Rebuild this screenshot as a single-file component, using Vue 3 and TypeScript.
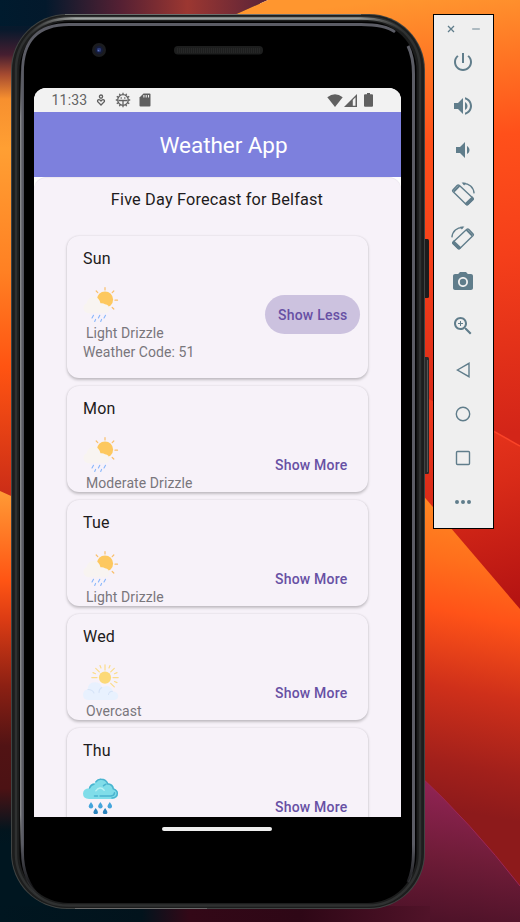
<script setup lang="ts">
import { ref } from 'vue'

type Weather = 'drizzle' | 'overcast' | 'rain'

interface Day {
  name: string
  weather: Weather
  label?: string
  code: number
  open: boolean
}

interface Tool {
  name: string
  solid?: string
  line?: string
  mirrored?: boolean
}

const days = ref<Day[]>([
  { name: 'Sun', weather: 'drizzle', label: 'Light Drizzle', code: 51, open: true },
  { name: 'Mon', weather: 'drizzle', label: 'Moderate Drizzle', code: 53, open: false },
  { name: 'Tue', weather: 'drizzle', label: 'Light Drizzle', code: 51, open: false },
  { name: 'Wed', weather: 'overcast', label: 'Overcast', code: 3, open: false },
  { name: 'Thu', weather: 'rain', code: 61, open: false },
])

const rotateSolid =
  'M2 8.800 7.600 3.200 9.200 4.600 3.600 10.300zM13.600 21.600 21.200 14.200 22.900 16.200Q23.300 17.200 22.600 17.900L17.200 23.200Q16.200 23.900 15.200 23.200zM10.600.6 15 .7 13.200 3.600z'
const rotateLine = 'M6.1 3.5 1.9 7.900Q1.200 8.700 1.900 9.500L15.200 22.400Q16 23 16.700 22.400L21.800 17.400Q22.500 16.600 21.800 15.900L8.200 3.300Q7.100 2.500 6.100 3.500ZM12 1.500C18 1.200 22.600 5.200 23.100 11.400'

const tools: Tool[] = [
  { name: 'power', solid: 'M13 3h-2v10h2V3zm4.830 2.170l-1.420 1.420C17.990 7.860 19 9.810 19 12c0 3.870-3.130 7-7 7s-7-3.130-7-7c0-2.190 1.010-4.140 2.580-5.420L6.170 5.170C4.230 6.820 3 9.260 3 12c0 4.970 4.030 9 9 9s9-4.030 9-9c0-2.740-1.230-5.180-3.170-6.830z' },
  { name: 'volume-up', solid: 'M3 9v6h4l5 5V4L7 9H3zm13.500 3c0-1.770-1.020-3.290-2.500-4.030v8.050c1.480-.73 2.500-2.250 2.500-4.020zM14 3.230v2.060c2.890.86 5 3.540 5 6.710s-2.110 5.850-5 6.710v2.060c4.010-.91 7-4.490 7-8.770s-2.990-7.860-7-8.770z' },
  { name: 'volume-down', solid: 'M18.500 12c0-1.770-1.020-3.290-2.500-4.030v8.050c1.480-.73 2.500-2.250 2.500-4.020zM5 9v6h4l5 5V4L9 9H5z' },
  { name: 'rotate-left', solid: rotateSolid, line: rotateLine },
  { name: 'rotate-right', solid: rotateSolid, line: rotateLine, mirrored: true },
  { name: 'camera', solid: 'M12 8.800a3.200 3.200 0 1 0 0 6.400 3.200 3.200 0 0 0 0-6.400zM9 2L7.170 4H4c-1.100 0-2 .9-2 2v12c0 1.100.9 2 2 2h16c1.100 0 2-.9 2-2V6c0-1.100-.9-2-2-2h-3.170L15 2H9zm3 15c-2.760 0-5-2.240-5-5s2.240-5 5-5 5 2.240 5 5-2.240 5-5 5z' },
  { name: 'zoom', solid: 'M15.500 14h-.79l-.28-.27C15.410 12.590 16 11.110 16 9.500 16 5.910 13.090 3 9.500 3S3 5.910 3 9.500 5.910 16 9.500 16c1.610 0 3.090-.59 4.230-1.570l.27.28v.79l5 4.990L20.490 19l-4.990-5zm-6 0C7.010 14 5 11.990 5 9.500S7.010 5 9.500 5 14 7.010 14 9.500 11.990 14 9.500 14zM12 10h-2v2H9v-2H7V9h2V7h1v2h2v1z' },
  { name: 'back', line: 'M6.400 12 18 5.300V18.700Z' },
  { name: 'home', line: 'M12 5.300a6.700 6.700 0 1 0 0 13.400 6.700 6.700 0 0 0 0-13.400Z' },
  { name: 'overview', line: 'M6.500 5.500h11q1 0 1 1v11q0 1-1 1h-11q-1 0-1-1v-11q0-1 1-1Z' },
  { name: 'more', solid: 'M6 10a2 2 0 1 0 0 4 2 2 0 0 0 0-4zm6 0a2 2 0 1 0 0 4 2 2 0 0 0 0-4zm6 0a2 2 0 1 0 0 4 2 2 0 0 0 0-4z' },
]

const gearTeeth = Array.from({ length: 12 }, (_, i) => i * 30)
const drops = [[8, 24], [17.4, 24], [26.8, 24], [12.7, 30], [22.1, 30]]
</script>

<template>
  <div class="desktop">
    <svg class="wallpaper" viewBox="0 0 520 922" aria-hidden="true">
      <defs>
        <linearGradient id="leftUpper" gradientUnits="userSpaceOnUse" x1="0" y1="0" x2="0" y2="495">
          <stop offset="0" stop-color="#001b2e" />
          <stop offset=".06" stop-color="#08192c" />
          <stop offset=".11" stop-color="#451e30" />
          <stop offset=".15" stop-color="#a54a30" />
          <stop offset=".2" stop-color="#f7902f" />
          <stop offset=".3" stop-color="#ff9f33" />
          <stop offset=".55" stop-color="#ff8023" />
          <stop offset=".74" stop-color="#ff5412" />
          <stop offset="1" stop-color="#cb2d17" />
        </linearGradient>
        <linearGradient id="leftLower" gradientUnits="userSpaceOnUse" x1="0" y1="492" x2="0" y2="845">
          <stop offset="0" stop-color="#ff9a35" />
          <stop offset=".25" stop-color="#ff5514" />
          <stop offset=".36" stop-color="#dc3c14" />
          <stop offset=".55" stop-color="#8c2013" />
          <stop offset=".72" stop-color="#511314" />
          <stop offset=".84" stop-color="#4c1214" />
          <stop offset=".96" stop-color="#02151e" />
          <stop offset="1" stop-color="#001620" />
        </linearGradient>
        <linearGradient id="topLeft" gradientUnits="userSpaceOnUse" x1="0" y1="0" x2="268" y2="0">
          <stop offset="0" stop-color="#001b2e" />
          <stop offset=".17" stop-color="#03192c" />
          <stop offset=".45" stop-color="#552033" />
          <stop offset=".7" stop-color="#9c3731" />
          <stop offset="1" stop-color="#5a2338" />
        </linearGradient>
        <linearGradient id="right" gradientUnits="userSpaceOnUse" x1="390" y1="0" x2="440" y2="440">
          <stop offset="0" stop-color="#ff962f" />
          <stop offset=".15" stop-color="#ff7624" />
          <stop offset=".33" stop-color="#ff501a" />
          <stop offset=".6" stop-color="#f53f1a" />
          <stop offset="1" stop-color="#d32518" />
        </linearGradient>
        <linearGradient id="wedge" gradientUnits="userSpaceOnUse" x1="430" y1="400" x2="490" y2="610">
          <stop offset="0" stop-color="#f03a1e" />
          <stop offset=".45" stop-color="#d92b18" />
          <stop offset="1" stop-color="#b41312" />
        </linearGradient>
        <linearGradient id="ember" gradientUnits="userSpaceOnUse" x1="452" y1="505" x2="398" y2="800">
          <stop offset="0" stop-color="#ff8622" />
          <stop offset=".18" stop-color="#ff6f1c" />
          <stop offset=".35" stop-color="#ff5318" />
          <stop offset=".6" stop-color="#cf301a" />
          <stop offset=".85" stop-color="#a2201b" />
          <stop offset="1" stop-color="#8d1a1b" />
        </linearGradient>
        <linearGradient id="plum" gradientUnits="userSpaceOnUse" x1="450" y1="790" x2="430" y2="922">
          <stop offset="0" stop-color="#8f2352" />
          <stop offset=".5" stop-color="#6f1c38" />
          <stop offset="1" stop-color="#4d1228" />
        </linearGradient>
        <linearGradient id="floor" x1="0" y1="0" x2="1" y2="0">
          <stop offset="0" stop-color="#001620" />
          <stop offset=".33" stop-color="#02131c" />
          <stop offset=".44" stop-color="#330817" />
          <stop offset=".7" stop-color="#2e0716" />
          <stop offset="1" stop-color="#511329" />
        </linearGradient>
      </defs>
      <rect width="260" height="600" fill="url(#leftUpper)" />
      <path d="M0 491 40 509H120V922H0Z" fill="url(#leftLower)" />
      <path d="M0 0H268L232 16V40H60L40 26H0Z" fill="url(#topLeft)" />
      <path d="M268 0H520V460H232V16Z" fill="url(#right)" />
      <path d="M415 392 520 446V620H415Z" fill="url(#wedge)" />
      <path d="M494 431.500 520 446" stroke="#fa4428" stroke-width="1.500" />
      <path d="M415 486 520 609V922H415Z" fill="url(#ember)" />
      <path d="M380 771H415Q472 824 520 886V922H380Z" fill="url(#plum)" />
      <path d="M415 771Q472 824 520 886" fill="none" stroke="#9d2657" />
      <rect y="906" width="430" height="16" fill="url(#floor)" />
    </svg>

    <main class="phone">
      <svg class="shell" viewBox="0 0 418 896" aria-hidden="true">
        <defs>
          <linearGradient id="topShine" gradientUnits="userSpaceOnUse" x1="20" y1="0" x2="392" y2="0">
            <stop offset="0" stop-color="#999" stop-opacity="0" />
            <stop offset=".12" stop-color="#a3a8a6" />
            <stop offset=".88" stop-color="#949a99" />
            <stop offset="1" stop-color="#888" stop-opacity="0" />
          </linearGradient>
          <linearGradient id="edgeFade" gradientUnits="userSpaceOnUse" x1="0" y1="830" x2="0" y2="885">
            <stop offset="0" stop-color="#5b5c65" />
            <stop offset="1" stop-color="#5b5c65" stop-opacity="0" />
          </linearGradient>
          <linearGradient id="sideGlint" gradientUnits="userSpaceOnUse" x1="0" y1="56" x2="0" y2="840">
            <stop offset="0" stop-color="#85868a" stop-opacity="0" />
            <stop offset=".06" stop-color="#85868a" />
            <stop offset=".95" stop-color="#85868a" />
            <stop offset="1" stop-color="#85868a" stop-opacity="0" />
          </linearGradient>
        </defs>
        <rect x="412" y="225" width="6" height="59" rx="1.500" fill="#1c1c1d" />
        <rect x="412" y="343" width="6" height="117" rx="1.500" fill="#29292a" />
        <path d="M416.500 346V458" stroke="#555" />
        <rect width="414" height="895" rx="56" fill="#404443" />
        <rect x="1" y="1" width="412" height="893" rx="55" fill="#1c1d1d" />
        <rect x="5" y="3.500" width="404" height="888" rx="52" fill="none" stroke="#2f3131" stroke-width="2.500" />
        <path d="M20 20Q34 4.500 60 4.500H350Q378 4.500 392 18" fill="none" stroke="url(#topShine)" stroke-width="2.500" />
        <path d="M54 .5H350" stroke="#6b6f6d" />
        <rect x="8.500" y="7.500" width="397" height="881.500" rx="49" fill="#000" />
        <path d="M29 883Q11.500 866 11.500 838V58Q11.500 10.500 58 10.500H350Q374 10.500 384 18" fill="none" stroke="url(#edgeFade)" stroke-width="2.800" />
        <rect x="9" y="56" width="1.500" height="784" fill="url(#sideGlint)" />
        <path d="M397 32Q402.500 43 402.500 60V838Q402.500 856 397 868" fill="none" stroke="url(#edgeFade)" stroke-width="3" />
        <path d="M64 894.500H196" stroke="#6a6a6a" />
        <circle cx="88" cy="36" r="7" fill="#1b1c1f" />
        <circle cx="88" cy="36" r="4.200" fill="#151b35" />
        <circle cx="88" cy="36" r="2.200" fill="#2b3a78" />
        <circle cx="87.500" cy="36.500" r=".8" fill="#6078b8" />
        <rect x="163" y="32" width="89" height="8.500" rx="4" fill="#1d1e1e" />
        <path d="M166 36.500H249" stroke="#262727" stroke-width="5" stroke-dasharray="1 1" />
      </svg>

      <section class="screen">
        <div class="status">
          <span class="clock">11:33</span>
          <svg class="s-person" viewBox="0 0 10 14">
            <circle cx="5" cy="3.600" r="1.600" />
            <path d="M5 12 1.700 8.700Q1 6.800 3 6.600 4.200 6.600 5 8 5.800 6.600 7 6.600 9 6.800 8.300 8.700Z" />
          </svg>
          <svg class="s-gear" viewBox="0 0 16 16">
            <circle cx="8" cy="8" r="5.300" />
            <path v-for="a in gearTeeth" :key="a" d="M8 2.300V.8" :transform="`rotate(${a} 8 8)`" />
            <path d="M3.500 8.500H12.500M8 8.500V13M5.600 6H6.800M9.200 6H10.400" />
          </svg>
          <svg class="s-card" viewBox="0 0 12 14">
            <path d="M4.500.5H10.500Q11.500.5 11.500 1.500V12.500Q11.500 13.500 10.500 13.500H1.500Q.5 13.500.5 12.500V4.500Z" fill="#606060" />
            <path d="M4.900 2V4.500M7.200 2V4.500M9.500 2V4.500" stroke="#f2f2f2" stroke-width="1.100" />
          </svg>
          <span class="gap"></span>
          <svg class="s-wifi" viewBox="0 0 16 13">
            <path d="M8 13 .3 3.300Q8-2.700 15.700 3.300Z" fill="#606060" />
          </svg>
          <svg class="s-signal" viewBox="0 0 13 13">
            <path d="M0 13 13 0V13Z" fill="#606060" />
            <path d="M8.800 6 11.500 3.300V11.700H8.800Z" fill="#f2f2f2" />
          </svg>
          <svg class="s-battery" viewBox="0 0 9 14">
            <path d="M3 0H6V1.300H8Q9 1.300 9 2.300V12.700Q9 13.700 8 13.700H1Q0 13.700 0 12.700V2.300Q0 1.300 1 1.300H3Z" fill="#606060" />
          </svg>
        </div>

        <header class="appbar"><h1>Weather App</h1></header>

        <div class="content">
          <h2>Five Day Forecast for Belfast</h2>
          <div class="list">
            <article v-for="day in days" :key="day.name" class="card" :class="{ open: day.open }">
              <div class="info">
                <h3>{{ day.name }}</h3>
                <svg v-if="day.weather === 'drizzle'" class="weather" viewBox="0 0 36 36">
                  <path d="M22 1.500V4M13.200 5 14.800 6.600M30.800 5 29.200 6.600M32 14.200H34.500M29.200 21.500 30.800 23" stroke="#f9bf6b" stroke-width="1.200" stroke-linecap="round" />
                  <circle cx="22" cy="13.600" r="8.100" fill="#fdc85f" />
                  <path d="M5.500 27.200A5.200 5.200 0 0 1 3.500 17.300Q5 11.200 10.800 10.800 16 11.200 17.500 17.300 20 16.700 22 18.200 26.500 19 26.400 23.200 25.800 27.200 22 27.200Z" fill="#f8f4f1" />
                  <path d="M10.500 29.300 9 32M16.800 29.300 15.400 32M22.500 29.300 21 32M12.600 33.400 11.700 35.500M18.600 33.400 17.700 35.500" stroke="#86b6fb" stroke-width="1.100" stroke-linecap="round" />
                </svg>
                <svg v-else-if="day.weather === 'overcast'" class="weather" viewBox="0 0 36 36">
                  <path d="M22 .8V6M8.800 13.600H14M30 13.600H35.200M12.700 4.300 16.300 7.900M31.300 4.300 27.700 7.900M31.300 22.900 27.700 19.300M17 1.600 18 4M27 1.600 26 4M34 8.600 31.500 9.700M34 18.600 31.500 17.500M10 8.600 12.500 9.700" stroke="#fbdc8a" stroke-width="1.200" stroke-linecap="round" />
                  <circle cx="22" cy="13.600" r="6.100" fill="#fcd978" />
                  <path d="M5 36Q0 35.500 0 30.500 .5 26 4.500 25.500 5 18.500 11.500 18.200 18 18.300 19 23.500 23 20.500 27 23.200 29.500 25 29.600 27.300 35 28 35.200 32 35 36 30.500 36Z" fill="#e8f1fe" />
                  <path d="M5 25.500Q9.500 25.500 11 29M18.800 23.500Q16 25 16 28.500M29.500 27.300Q26 27.500 25.500 30.500" fill="none" stroke="#d5e3f7" stroke-width="1.100" stroke-linecap="round" />
                </svg>
                <svg v-else class="weather" viewBox="0 0 36 36">
                  <path d="M6 21Q0 20.800 0 15.500 .4 10.500 6 10.200 6.800 5.500 11.500 5.300 13.500 1 18 .8 23 .8 25.300 5.300 30.500 5.500 31 10.500 35 11.800 35 15.500 35 20.800 29 21Z" fill="#80dde9" />
                  <path d="M13 3.800Q15 1 18 1.200 23 1.200 24.800 5.900 29.500 6 30.300 10.900 34.500 12.500 34.300 15.500 34 19.500 29 20M6.600 10Q8 6.500 11 6.300M17 18H28Q31.500 17.500 31.500 14.800M11.500 18H14.500M23 6.200Q21.500 6.500 20.500 7.800" fill="none" stroke="#4bb3cf" stroke-width="1.500" stroke-linecap="round" />
                  <path d="M12.800 12.800Q17 7.500 21.200 12.200" fill="none" stroke="#baf1f4" stroke-width="1.300" stroke-linecap="round" />
                  <path v-for="(p, i) in drops" :key="i" d="M0 0Q-2.200 3-2.200 4.200A2.200 2.200 0 0 0 2.200 4.200Q2.200 3 0 0Z" :fill="i < 3 ? '#44a5dc' : '#2c84bd'" :transform="`translate(${p[0]} ${p[1]})`" />
                </svg>
                <p v-if="day.label" class="label">{{ day.label }}</p>
                <p v-if="day.open" class="code">Weather Code: {{ day.code }}</p>
              </div>
              <button type="button" @click="day.open = !day.open">{{ day.open ? 'Show Less' : 'Show More' }}</button>
            </article>
          </div>
        </div>
      </section>
      <div class="handle"></div>
    </main>

    <aside class="toolbar">
      <div class="window">
        <svg viewBox="0 0 10 10"><path d="M2 2 8 8M8 2 2 8" /></svg>
        <svg viewBox="0 0 10 10"><path d="M1.200 5H8.800" opacity=".7" /></svg>
      </div>
      <div v-for="tool in tools" :key="tool.name" class="tool">
        <svg viewBox="0 0 24 24" :class="{ mirrored: tool.mirrored }">
          <path v-if="tool.solid" :d="tool.solid" fill="#607d8b" />
          <path v-if="tool.line" :d="tool.line" fill="none" stroke="#607d8b" stroke-width="1.400" />
        </svg>
      </div>
    </aside>
  </div>
</template>

<style>
body {
  margin: 0;
}
</style>

<style scoped>
.desktop {
  position: relative;
  box-sizing: border-box;
  width: 520px;
  height: 922px;
  padding: 14px 26px 0 11px;
  display: flex;
  align-items: flex-start;
  gap: 8px;
  overflow: hidden;
  font-family: Roboto, "Liberation Sans", sans-serif;
}
.wallpaper {
  position: absolute;
  inset: 0;
  width: 520px;
  height: 922px;
}
.phone {
  position: relative;
  box-sizing: border-box;
  flex: none;
  width: 414px;
  height: 895px;
  padding: 74px 24px 0 23px;
}
.shell {
  position: absolute;
  left: 0;
  top: 0;
  width: 418px;
  height: 896px;
}
.screen {
  position: relative;
  width: 367px;
  height: 729px;
  border-radius: 12px 12px 0 0;
  overflow: hidden;
  background: #fff;
}
.handle {
  position: relative;
  width: 110px;
  height: 4px;
  margin: 10px 0 0 128px;
  border-radius: 2px;
  background: #eee;
}
.status {
  display: flex;
  align-items: center;
  box-sizing: border-box;
  height: 24px;
  padding: 0 28px 0 17.500px;
  background: #f2f2f2;
}
.clock {
  width: 44px;
  font-size: 14px;
  line-height: 24px;
  letter-spacing: .2px;
  color: #646464;
}
.s-person,
.s-gear {
  fill: none;
  stroke: #606060;
  stroke-width: 1.300;
}
.s-person {
  width: 10px;
  height: 14px;
  margin-right: 9px;
}
.s-gear {
  width: 16px;
  height: 16px;
  margin-right: 8.500px;
}
.s-card {
  width: 12px;
  height: 14px;
}
.gap {
  flex: 1;
}
.s-wifi {
  width: 16px;
  height: 13px;
  margin-right: 1px;
}
.s-signal {
  width: 13px;
  height: 13px;
  margin-right: 7px;
}
.s-battery {
  width: 9px;
  height: 14px;
}
.appbar {
  display: flex;
  align-items: center;
  justify-content: center;
  box-sizing: border-box;
  height: 65px;
  padding: 0 0 0 12px;
  background: #7d80dd;
}
h1,
h2,
h3,
p {
  margin: 0;
  font-weight: 400;
  white-space: nowrap;
}
h1 {
  font-size: 22.500px;
  line-height: 30px;
  letter-spacing: -.06px;
  color: #fff;
}
.content {
  box-sizing: border-box;
  height: 640px;
  padding-top: 12px;
  border-radius: 12px 12px 0 0;
  background: #f7f2f9;
  box-shadow: inset 0 1px 1px #0000000c;
}
h2 {
  padding-right: 1px;
  text-align: center;
  font-size: 16.300px;
  line-height: 22px;
  letter-spacing: .17px;
  color: #1d1b20;
}
.list {
  display: flex;
  flex-direction: column;
  gap: 8.500px;
  padding: 25.200px 33px 0 32.500px;
}
.card {
  display: flex;
  align-items: flex-start;
  justify-content: space-between;
  flex: none;
  box-sizing: border-box;
  height: 105.500px;
  padding: 0 8px 0 16.500px;
  border-radius: 12px;
  background: #f7f2f9;
  box-shadow: 0 1.500px 3px #00000038, 0 0 2px #00000010;
}
.card.open {
  height: 141.500px;
}
.info {
  padding-top: 13px;
}
h3 {
  font-size: 16px;
  line-height: 20px;
  letter-spacing: .2px;
  color: #1d1b20;
}
.weather {
  display: block;
  width: 36px;
  height: 36px;
  margin-top: 17px;
}
.label,
.code {
  font-size: 14px;
  line-height: 19px;
  letter-spacing: .08px;
  color: #79767c;
}
.label {
  margin: 1.800px 0 0 3px;
}
button {
  height: 39px;
  margin-top: 59px;
  padding: 1px 12.500px 0;
  border: 0;
  border-radius: 20px;
  background: transparent;
  font: 500 14px/38px Roboto, "Liberation Sans", sans-serif;
  letter-spacing: .22px;
  white-space: nowrap;
  color: #6750a4;
}
.open button {
  background: #ccc2df;
}
.toolbar {
  position: relative;
  box-sizing: border-box;
  flex: none;
  width: 61px;
  height: 515px;
  border: 1px solid #000;
  background: #efefef;
}
.window {
  display: flex;
  align-items: center;
  gap: 15px;
  height: 25px;
  padding: 2px 0 0 12px;
  box-sizing: border-box;
}
.window svg {
  width: 10px;
  height: 10px;
  stroke: #607d8b;
  stroke-width: 1.300;
}
.tool {
  display: flex;
  align-items: center;
  justify-content: center;
  height: 44px;
  padding-right: 1px;
}
.tool svg {
  width: 24px;
  height: 24px;
}
.tool .mirrored {
  transform: scaleX(-1);
}
</style>
